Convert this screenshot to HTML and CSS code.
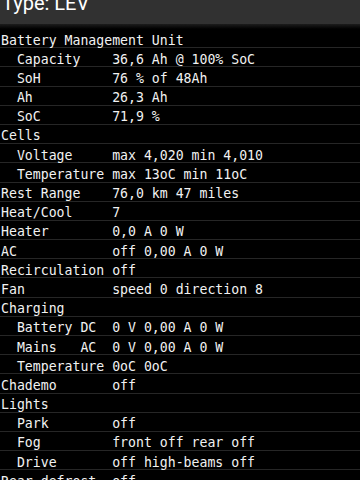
FILE: index.html
```html
<!DOCTYPE html>
<html>
<head>
<meta charset="utf-8">
<link rel="stylesheet" href="styles.css">
</head>
<body>
<div class="screen">
  <header class="bar"><span class="title">Type: LEV</span></header>
  <div class="shadow"></div>
  <div class="list">
    <div class="row"><span class="k">Battery Management Unit</span></div>
    <div class="row"><span class="k">  Capacity</span><span class="v">36,6 Ah @ 100% SoC</span></div>
    <div class="row"><span class="k">  SoH</span><span class="v">76 % of 48Ah</span></div>
    <div class="row"><span class="k">  Ah</span><span class="v">26,3 Ah</span></div>
    <div class="row"><span class="k">  SoC</span><span class="v">71,9 %</span></div>
    <div class="row"><span class="k">Cells</span></div>
    <div class="row"><span class="k">  Voltage</span><span class="v">max 4,020 min 4,010</span></div>
    <div class="row"><span class="k">  Temperature</span><span class="v">max 13oC min 11oC</span></div>
    <div class="row"><span class="k">Rest Range</span><span class="v">76,0 km 47 miles</span></div>
    <div class="row"><span class="k">Heat/Cool</span><span class="v">7</span></div>
    <div class="row"><span class="k">Heater</span><span class="v">0,0 A 0 W</span></div>
    <div class="row"><span class="k">AC</span><span class="v">off 0,00 A 0 W</span></div>
    <div class="row"><span class="k">Recirculation</span><span class="v">off</span></div>
    <div class="row"><span class="k">Fan</span><span class="v">speed 0 direction 8</span></div>
    <div class="row"><span class="k">Charging</span></div>
    <div class="row"><span class="k">  Battery DC</span><span class="v">0 V 0,00 A 0 W</span></div>
    <div class="row"><span class="k">  Mains   AC</span><span class="v">0 V 0,00 A 0 W</span></div>
    <div class="row"><span class="k">  Temperature</span><span class="v">0oC 0oC</span></div>
    <div class="row"><span class="k">Chademo</span><span class="v">off</span></div>
    <div class="row"><span class="k">Lights</span></div>
    <div class="row"><span class="k">  Park</span><span class="v">off</span></div>
    <div class="row"><span class="k">  Fog</span><span class="v">front off rear off</span></div>
    <div class="row"><span class="k">  Drive</span><span class="v">off high-beams off</span></div>
    <div class="row"><span class="k">Rear defrost</span><span class="v">off</span></div>
  </div>
</div>
</body>
</html>
```
FILE: styles.css
```css
html, body {
  margin: 0;
  padding: 0;
  background: #000;
}
.screen {
  width: 360px;
  height: 480px;
  overflow: hidden;
  background: #000;
}
.bar {
  height: 24px;
  background: #313131;
  overflow: hidden;
  display: flex;
  align-items: flex-start;
}
.title {
  font-family: Roboto, "Noto Sans", sans-serif;
  font-size: 20px;
  line-height: 20px;
  color: #fff;
  margin-top: -7px;
  padding-left: 2px;
  white-space: nowrap;
}
.shadow {
  height: 5px;
  background: linear-gradient(#1c1c1c, #000);
}
.list {
  display: flex;
  flex-direction: column;
}
.row {
  display: grid;
  grid-template-columns: 14ch 1fr;
  height: 13.7px;
  padding-top: 4.5px;
  border-bottom: 1px solid #262626;
  font-family: "DejaVu Sans Mono", monospace;
  font-size: 13.2px;
  line-height: 13.7px;
  color: #f2f2f2;
  padding-left: 1px;
  white-space: pre;
  flex: none;
}
.row .k:only-child {
  grid-column: 1 / span 2;
}
```
